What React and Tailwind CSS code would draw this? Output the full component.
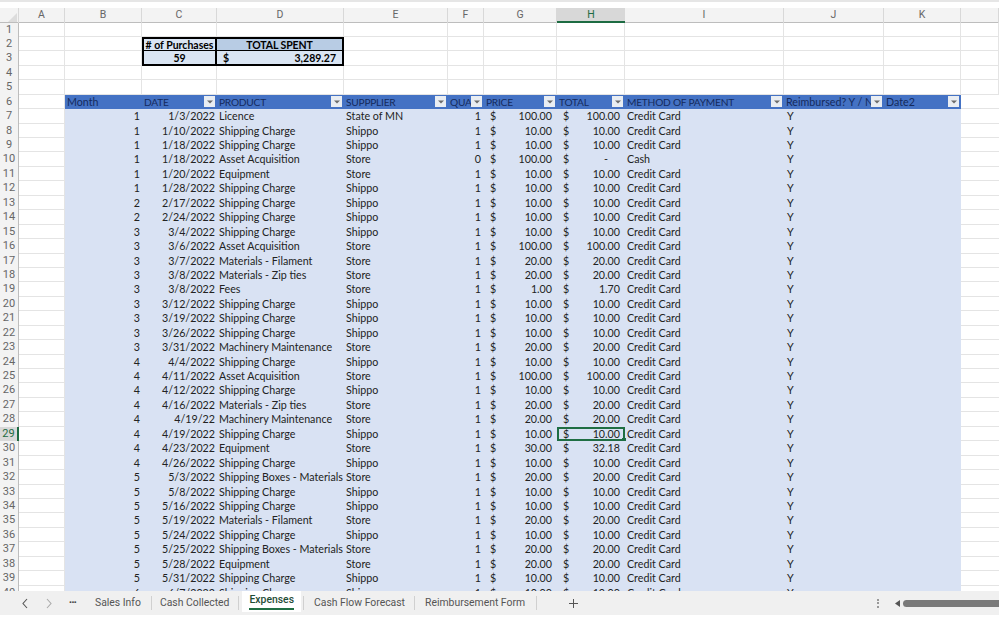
const cols = ["A","B","C","D","E","F","G","H","I","J","K",""];
const SC = "Shipping Charge";
const CC = "Credit Card";
const rows = [
["1","1/3/2022","Licence","State of MN","1","100.00","100.00",CC],
["1","1/10/2022",SC,"Shippo","1","10.00","10.00",CC],
["1","1/18/2022",SC,"Shippo","1","10.00","10.00",CC],
["1","1/18/2022","Asset Acquisition","Store","0","100.00","-","Cash"],
["1","1/20/2022","Equipment","Store","1","10.00","10.00",CC],
["1","1/28/2022",SC,"Shippo","1","10.00","10.00",CC],
["2","2/17/2022",SC,"Shippo","1","10.00","10.00",CC],
["2","2/24/2022",SC,"Shippo","1","10.00","10.00",CC],
["3","3/4/2022",SC,"Shippo","1","10.00","10.00",CC],
["3","3/6/2022","Asset Acquisition","Store","1","100.00","100.00",CC],
["3","3/7/2022","Materials - Filament","Store","1","20.00","20.00",CC],
["3","3/8/2022","Materials - Zip ties","Store","1","20.00","20.00",CC],
["3","3/8/2022","Fees","Store","1","1.00","1.70",CC],
["3","3/12/2022",SC,"Shippo","1","10.00","10.00",CC],
["3","3/19/2022",SC,"Shippo","1","10.00","10.00",CC],
["3","3/26/2022",SC,"Shippo","1","10.00","10.00",CC],
["3","3/31/2022","Machinery Maintenance","Store","1","20.00","20.00",CC],
["4","4/4/2022",SC,"Shippo","1","10.00","10.00",CC],
["4","4/11/2022","Asset Acquisition","Store","1","100.00","100.00",CC],
["4","4/12/2022",SC,"Shippo","1","10.00","10.00",CC],
["4","4/16/2022","Materials - Zip ties","Store","1","20.00","20.00",CC],
["4","4/19/22","Machinery Maintenance","Store","1","20.00","20.00",CC],
["4","4/19/2022",SC,"Shippo","1","10.00","10.00",CC],
["4","4/23/2022","Equipment","Store","1","30.00","32.18",CC],
["4","4/26/2022",SC,"Shippo","1","10.00","10.00",CC],
["5","5/3/2022","Shipping Boxes - Materials","Store","1","20.00","20.00",CC],
["5","5/8/2022",SC,"Shippo","1","10.00","10.00",CC],
["5","5/16/2022",SC,"Shippo","1","10.00","10.00",CC],
["5","5/19/2022","Materials - Filament","Store","1","20.00","20.00",CC],
["5","5/24/2022",SC,"Shippo","1","10.00","10.00",CC],
["5","5/25/2022","Shipping Boxes - Materials","Store","1","20.00","20.00",CC],
["5","5/28/2022","Equipment","Store","1","20.00","20.00",CC],
["5","5/31/2022",SC,"Shippo","1","10.00","10.00",CC],
["6","6/7/2022",SC,"Shippo","1","10.00","10.00",CC],
];
const GRID = "grid grid-cols-[19px_46px_77px_75px_127px_104px_36px_73px_68px_159px_100px_77px_38px]";
const ROW = GRID + " h-[14.45px] leading-[14px] overflow-hidden";
const BOX = "font-bold text-black text-[10.5px] leading-[13px] whitespace-nowrap overflow-hidden border-black border-r-2 ";

function Filter() {
  return (
    <span className="absolute right-[2px] top-[1.5px] w-[11px] h-[11px] bg-[#e9edf2] flex items-center justify-center">
      <svg width="6" height="4" viewBox="0 0 6 4"><path d="M0 0.5 L6 0.5 L3 3.5 Z" fill="#6b6b6b" /></svg>
    </span>
  );
}
function Num({ n, active }) {
  return (
    <div className={"text-center text-[11px] font-['Roboto',sans-serif] " + (active ? "bg-[#d8d8d8] text-[#1d6b42] border-r-2 border-[#1d6b42]" : "bg-[#f3f3f3] text-[#666] border-r border-[#bdbdbd]")}>{n}</div>
  );
}
function Blank({ n }) {
  return (
    <div className={ROW}>
      <Num n={n} />
      {cols.map((c, i) => <div key={i} className="border-r border-b border-[#e4e4e4]" />)}
    </div>
  );
}
function Head({ label, filter = true, caps = true }) {
  return (
    <div className={"relative bg-[#4472c4] text-[#142a5c] pl-[2px] overflow-hidden whitespace-nowrap " + (caps ? "text-[10.2px] tracking-[-0.25px]" : "")}>
      {label}{filter && <Filter />}
    </div>
  );
}
const Cell = ({ children, className = "" }) => (
  <div className={"bg-[#d9e2f3] whitespace-nowrap " + className}>{children}</div>
);
function Money({ v, selected }) {
  const dash = v === "-";
  return (
    <div className={"relative bg-[#d9e2f3] flex justify-between pl-[6px] whitespace-nowrap " + (dash ? "pr-[17px]" : "pr-[5px]")}>
      <span>$</span><span>{v}</span>
      {selected && <span className="absolute inset-0 border-2 border-[#1f6e43]"><span className="absolute right-[-3px] bottom-[-3px] w-[4px] h-[4px] bg-[#1f6e43]" /></span>}
    </div>
  );
}
function Data({ r, i }) {
  const n = i + 7;
  return (
    <div className={ROW}>
      <Num n={n} active={n === 29} />
      <div className="border-r border-b border-[#e4e4e4]" />
      <Cell className="text-right pr-[2px]">{r[0]}</Cell>
      <Cell className="text-right pr-[2px]">{r[1]}</Cell>
      <Cell className="pl-[2px]">{r[2]}</Cell>
      <Cell className="pl-[2px]">{r[3]}</Cell>
      <Cell className="text-right pr-[3px]">{r[4]}</Cell>
      <Money v={r[5]} />
      <Money v={r[6]} selected={n === 29} />
      <Cell className="pl-[2px]">{r[7]}</Cell>
      <Cell className="pl-[3px]">Y</Cell>
      <Cell />
      <div className="border-b border-[#e4e4e4]" />
    </div>
  );
}
function Chevron({ d, c }) {
  return <svg width="8" height="11" viewBox="0 0 8 11"><path d={d} fill="none" stroke={c} strokeWidth="1.1" /></svg>;
}

export default function App() {
  return (
    <div className="w-[999px] h-[617px] overflow-hidden bg-white flex flex-col text-[10.7px] text-[#222] font-['Lato','Liberation_Sans',sans-serif]">
      <div className="h-[8px] shrink-0 bg-white border-t-2 border-[#e6e6e6]" />
      <div className="grid grid-cols-[19px_46px_77px_75px_127px_104px_36px_73px_68px_159px_100px_77px_38px] h-[14.5px] shrink-0 bg-[#f3f3f3] border-b border-[#bdbdbd] text-[10.5px] text-[#666] leading-[14px] font-['Roboto',sans-serif]">
        <div className="relative border-r border-[#d8d8d8]">
          <svg className="absolute right-[1px] bottom-[1px]" width="9" height="9" viewBox="0 0 9 9"><path d="M9 0V9H0Z" fill="#dcdcdc" /></svg>
        </div>
        {cols.map((c, i) => (
          <div key={i} className={"text-center " + (c === "H" ? "bg-[#d8d8d8] text-[#1d6b42] border-b-2 border-[#1d6b42] h-[15px]" : "border-r border-[#d8d8d8]")}>{c}</div>
        ))}
      </div>
      <div className="flex-1 min-h-0 overflow-hidden">
        <Blank n={1} />
        <div className={ROW}>
          <Num n={2} />
          <div className="border-r border-b border-[#e4e4e4]" />
          <div className="border-r border-b border-[#e4e4e4]" />
          <div className={BOX + "bg-[#dae5f3] border-l-2 border-t-2 border-b text-center"}>#&nbsp;of Purchases</div>
          <div className={BOX + "bg-[#b8cce4] border-t-2 border-b text-center tracking-[-0.1px]"}>TOTAL SPENT</div>
          {[0,1,2,3,4,5,6,7].map(k => <div key={k} className="border-r border-b border-[#e4e4e4]" />)}
        </div>
        <div className={ROW}>
          <Num n={3} />
          <div className="border-r border-b border-[#e4e4e4]" />
          <div className="border-r border-b border-[#e4e4e4]" />
          <div className={BOX + "bg-[#dae5f3] border-l-2 border-b-2 text-center pt-[1px]"}>59</div>
          <div className={BOX + "bg-[#dae5f3] border-b-2 flex justify-between px-[6px] pt-[1px]"}><span>$</span><span>3,289.27</span></div>
          {[0,1,2,3,4,5,6,7].map(k => <div key={k} className="border-r border-b border-[#e4e4e4]" />)}
        </div>
        <Blank n={4} />
        <Blank n={5} />
        <div className={ROW}>
          <Num n={6} />
          <div className="border-r border-b border-[#e4e4e4]" />
          <Head label="Month" filter={false} caps={false} />
          <Head label="DATE" />
          <Head label="PRODUCT" />
          <Head label="SUPPPLIER" />
          <Head label="QUA" />
          <Head label="PRICE" />
          <Head label="TOTAL" />
          <Head label="METHOD OF PAYMENT" />
          <Head label="Reimbursed? Y / N" caps={false} />
          <Head label="Date2" caps={false} />
          <div className="border-b border-[#e4e4e4]" />
        </div>
        {rows.map((r, i) => <Data key={i} r={r} i={i} />)}
      </div>
      <div className="h-[26px] shrink-0 bg-[#f0f0f0] border-b-2 border-white flex items-center text-[10.4px] text-[#555] font-['Roboto',sans-serif]">
        <div className="w-[85px] flex items-center shrink-0 pl-[21px] gap-[16px]">
          <Chevron d="M6 1 L2 5.5 L6 10" c="#555" />
          <Chevron d="M2 1 L6 5.5 L2 10" c="#aaa" />
          <span className="w-[10px] text-[8px] font-bold leading-none text-[#444] tracking-[-0.5px]">•••</span>
        </div>
        <div className="flex items-center h-full">
          <div className="h-[14px] leading-[14px] pl-[10px] pr-[10px] border-r border-[#d0d0d0] shrink-0 whitespace-nowrap">Sales Info</div>
          <div className="h-[14px] leading-[14px] pl-[8px] pr-[9px] border-r border-[#d0d0d0] shrink-0 whitespace-nowrap">Cash Collected</div>
          <div className="h-[21px] self-start bg-white px-[7px] ml-[3px] mr-[2px] pt-[2px] font-medium text-[#1f4d36] shrink-0">
            <div className="border-b-2 border-[#1f6e43] pb-[2px] leading-[13px]">Expenses</div>
          </div>
          <div className="h-[14px] leading-[14px] pl-[10px] pr-[9px] border-l border-r border-[#d0d0d0] shrink-0 whitespace-nowrap">Cash Flow Forecast</div>
          <div className="h-[14px] leading-[14px] pl-[10px] pr-[11px] border-r border-[#d0d0d0] shrink-0 whitespace-nowrap">Reimbursement Form</div>
        </div>
        <svg className="ml-[31px] shrink-0" width="11" height="11" viewBox="0 0 11 11"><path d="M5.5 1V10M1 5.5H10" stroke="#555" strokeWidth="1" /></svg>
        <div className="flex-1" />
        <span className="w-[2px] h-[9px] border-l-2 border-dotted border-[#999] mr-[16px]" />
        <svg className="shrink-0 mr-[2px]" width="6" height="7" viewBox="0 0 6 7"><path d="M5 0V7L0 3.5Z" fill="#555" /></svg>
        <div className="w-[96px] h-[7px] rounded-l-full bg-[#7a7a7a]" />
      </div>
    </div>
  );
}
